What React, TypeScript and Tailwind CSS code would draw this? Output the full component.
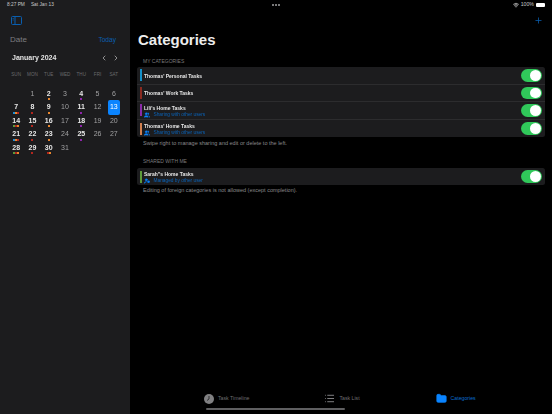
import { ChevronLeft, ChevronRight, Plus, Wifi, List, Folder, Users, UserCog } from 'lucide-react';

const O = '#e8862e';
const P = '#8e24aa';
const R = '#b3261e';
const B = '#1f8fd6';
const G = '#5d9a3a';

const days: { d?: number; bold?: boolean; dots?: string[] }[] = [
  {},
  { d: 1 },
  { d: 2, bold: true, dots: [O] },
  { d: 3 },
  { d: 4, bold: true, dots: [P] },
  { d: 5 },
  { d: 6 },
  { d: 7, bold: true, dots: [B, O, R] },
  { d: 8, bold: true, dots: [R] },
  { d: 9, bold: true, dots: [O] },
  { d: 10 },
  { d: 11, bold: true, dots: [P] },
  { d: 12 },
  { d: 13 },
  { d: 14, bold: true, dots: [G, R, O] },
  { d: 15, bold: true, dots: [R] },
  { d: 16, bold: true, dots: [O] },
  { d: 17 },
  { d: 18, bold: true, dots: [P] },
  { d: 19 },
  { d: 20 },
  { d: 21, bold: true, dots: [B, O, R] },
  { d: 22, bold: true, dots: [R] },
  { d: 23, bold: true, dots: [O] },
  { d: 24 },
  { d: 25, bold: true, dots: [P] },
  { d: 26 },
  { d: 27 },
  { d: 28, bold: true, dots: [G, R, O] },
  { d: 29, bold: true, dots: [R] },
  { d: 30, bold: true, dots: [R, O] },
  { d: 31 },
];

const Toggle = () => (
  <div className="flex h-[12.5px] w-[21px] items-center justify-end rounded-full bg-[#30c85a] pr-[1px]">
    <div className="h-[10.5px] w-[10.5px] rounded-full bg-white" />
  </div>
);

const Row = ({ name, color, sub, managed, last }: { name: string; color: string; sub?: string; managed?: boolean; last?: boolean }) => (
  <div className={`flex h-[17.6px] items-center pl-[3px] pr-[3.5px] ${last ? '' : 'border-b border-[#2c2c2e]'}`}>
    <div className="mr-[2px] h-[12px] w-[2px]" style={{ background: color }} />
    <div className="flex-1 pt-[1px] will-change-transform">
      <div className="text-[5px] leading-[6.5px] font-bold text-[#e8e8e8]">{name}</div>
      {sub && (
        <div className="flex items-center text-[4.8px] leading-[6px] text-[#0a63b8]">
          {managed ? (
            <UserCog size={6} fill="currentColor" className="mr-[3.5px] text-[#0a84ff]" />
          ) : (
            <Users size={6} fill="currentColor" className="mr-[3.5px] text-[#0a84ff]" />
          )}
          {sub}
        </div>
      )}
    </div>
    <Toggle />
  </div>
);

const Tab = ({ icon, label, active }: { icon: React.ReactNode; label: string; active?: boolean }) => (
  <div className="flex items-center gap-[4px]">
    {icon}
    <span className={`text-[5.2px] ${active ? 'text-[#0a6fd0]' : 'text-[#6e6e70]'}`}>{label}</span>
  </div>
);

export default function App() {
  return (
    <div className="relative flex h-[414px] w-[552px] overflow-hidden bg-black font-['Liberation_Sans',sans-serif]">
      {/* sidebar */}
      <div className="flex w-[130px] flex-col bg-[#1c1c1e]">
        <div className="flex h-[10px] items-center pl-[7px] text-[4.8px] font-medium text-[#c8c8c8]">
          <span className="mr-[6px]">8:27 PM</span>
          <span>Sat Jan 13</span>
        </div>
        <div className="mt-[5.5px] pl-[11px]">
          <svg className="block" width="11" height="9" viewBox="0 0 11 9" fill="none" stroke="#0a5fb0" strokeWidth="1">
            <rect x="0.5" y="0.5" width="10" height="8" rx="1" />
            <path d="M4 0.5V8.5" />
            <path d="M1.5 2.5H3M1.5 4H3" strokeWidth="0.6" />
          </svg>
        </div>
        <div className="mt-[10px] flex items-center justify-between pl-[10px] pr-[14px]">
          <span className="text-[8px] leading-[10px] text-[#7d7d80]">Date</span>
          <span className="text-[6.6px] leading-[10px] font-medium text-[#0a5fb0]">Today</span>
        </div>
        <div className="mt-[8.5px] flex items-center justify-between pl-[12px] pr-[10px] will-change-transform">
          <span className="text-[7px] leading-[10px] font-bold text-[#e4e4e4]">January 2024</span>
          <div className="flex items-center gap-[4px] text-[#c8c8c8]">
            <ChevronLeft size={8} />
            <ChevronRight size={8} />
          </div>
        </div>
        <div className="mt-[9px] grid grid-cols-7 px-[8px] text-center text-[4.6px] leading-[6px] text-[#6a6a6c]">
          {['SUN', 'MON', 'TUE', 'WED', 'THU', 'FRI', 'SAT'].map((h) => (
            <div key={h}>{h}</div>
          ))}
        </div>
        <div className="mt-[8.75px] grid grid-cols-7 px-[8px] text-center will-change-transform">
          {days.map((c, i) => (
            <div key={i} className="relative flex h-[13.5px] items-center justify-center">
              {c.d === 13 && <div className="absolute inset-x-[2.5px] top-[-0.5px] bottom-[-0.5px] rounded-[2px] bg-[#0a84ff]" />}
              {c.d && (
                <span className={`relative text-[7px] leading-[8px] ${c.bold ? 'font-bold text-[#e8e8e8]' : c.d === 13 ? 'text-white' : 'text-[#a0a0a2]'}`}>
                  {c.d}
                </span>
              )}
              {c.dots && (
                <div className="absolute bottom-[0.5px] flex gap-[0.3px]">
                  {c.dots.map((col, j) => (
                    <div key={j} className="h-[1.6px] w-[2px]" style={{ background: col }} />
                  ))}
                </div>
              )}
            </div>
          ))}
        </div>
      </div>

      {/* main */}
      <div className="flex flex-1 flex-col">
        <div className="flex h-[10px] items-center justify-end pr-[7px] text-[5.2px] text-[#c8c8c8]">
          <Wifi size={6} strokeWidth={3} className="mr-[2px]" />
          <span className="mr-[2px]">100%</span>
          <div className="h-[4.5px] w-[9px] rounded-[1px] bg-white" />
        </div>
        <div className="flex justify-end pr-[9px] pt-[6px]">
          <Plus size={9} strokeWidth={2} className="block text-[#0a5fb0]" />
        </div>
        <div className="mt-[6px] pl-[8px] text-[15px] leading-[18px] font-bold text-[#ededed]">Categories</div>

        <div className="mt-[8.5px] pl-[13px] text-[5px] leading-[7px] text-[#7a7a7c]">MY CATEGORIES</div>
        <div className="mx-[7px] mt-[2.5px] rounded-[2.5px] bg-[#1c1c1e]">
          <Row name="Thomas' Personal Tasks" color="#1590c8" />
          <Row name="Thomas' Work Tasks" color="#8a2a20" />
          <Row name="Lili's Home Tasks" color="#8a2aa8" sub="Sharing with other users" />
          <Row name="Thomas' Home Tasks" color="#d08050" sub="Sharing with other users" last />
        </div>
        <div className="mt-[3px] pl-[13px] text-[5.5px] leading-[7px] text-[#8a8a8c]">
          Swipe right to manage sharing and edit or delete to the left.
        </div>

        <div className="mt-[10.5px] pl-[13px] text-[5px] leading-[7px] text-[#7a7a7c]">SHARED WITH ME</div>
        <div className="mx-[7px] mt-[3px] rounded-[2.5px] bg-[#1c1c1e]">
          <Row name={'Sarah"s Home Tasks'} color="#5d9a3a" sub="Managed by other user" managed last />
        </div>
        <div className="mt-[1.5px] pl-[13px] text-[5.5px] leading-[7px] text-[#8a8a8c]">
          Editing of foreign categories is not allowed (except completion).
        </div>

        <div className="mt-auto">
          <div className="flex h-[11px] items-center pl-[74px]">
            <Tab
              icon={
                <svg className="block" width="10" height="10" viewBox="0 0 10 10">
                  <circle cx="5" cy="5" r="5" fill="#808082" />
                  <path d="M5 2V5L3 6.5" fill="none" stroke="#1c1c1e" strokeWidth="0.8" />
                </svg>
              }
              label="Task Timeline"
            />
            <div className="ml-[75px]">
              <Tab icon={<List size={11} className="text-[#8a8a8c]" />} label="Task List" />
            </div>
            <div className="ml-[76px]">
              <Tab icon={<Folder size={11} fill="#0a84ff" className="text-[#0a84ff]" />} label="Categories" active />
            </div>
          </div>
          <div className="h-[10px]" />
        </div>
      </div>

      {/* overlays */}
      <div className="absolute top-[4px] left-[272px] flex gap-[1px]">
        <div className="h-[2px] w-[2px] rounded-full bg-[#a0a0a2]" />
        <div className="h-[2px] w-[2px] rounded-full bg-[#a0a0a2]" />
        <div className="h-[2px] w-[2px] rounded-full bg-[#a0a0a2]" />
      </div>
      <div className="absolute bottom-[4px] left-[206px] h-[2px] w-[139px] rounded-full bg-[#5f5f61]" />
    </div>
  );
}
